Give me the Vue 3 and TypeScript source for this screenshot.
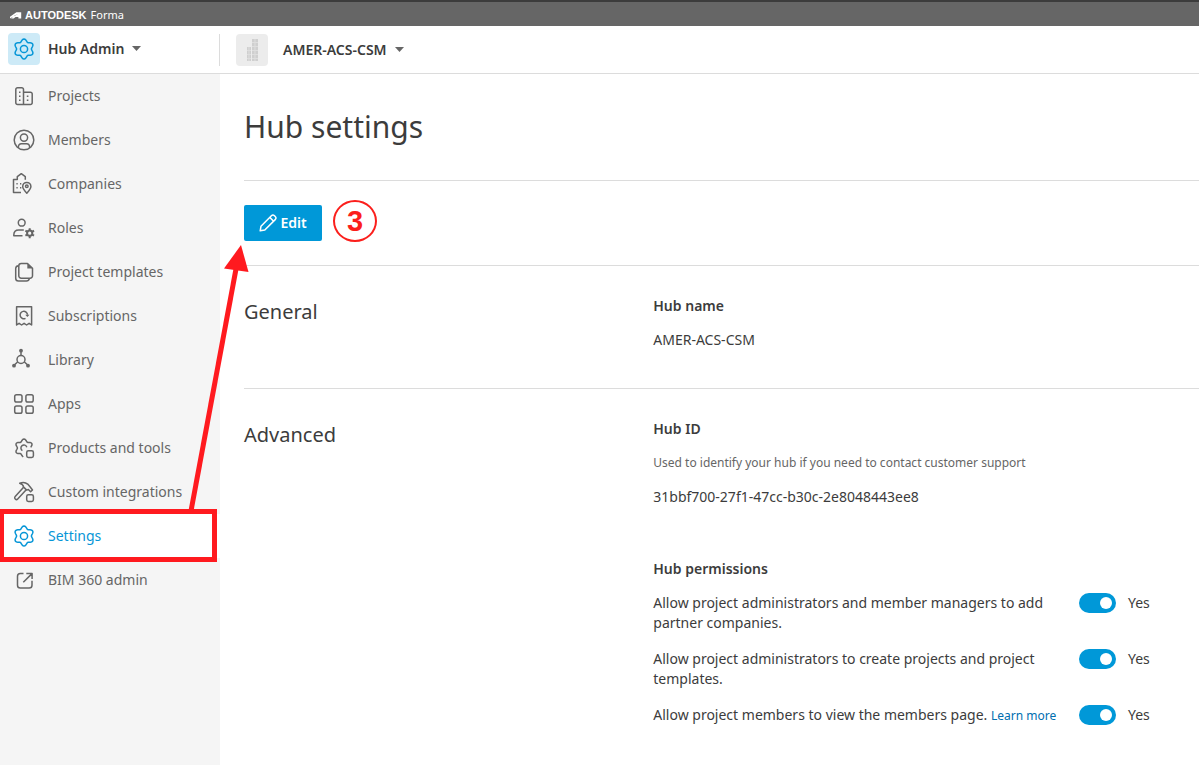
<script setup lang="ts">
import { ref } from 'vue'

interface NavItem {
  id: string
  label: string
}

interface Permission {
  id: string
  text: string
  link?: string
  enabled: boolean
}

const navItems: NavItem[] = [
  { id: 'projects', label: 'Projects' },
  { id: 'members', label: 'Members' },
  { id: 'companies', label: 'Companies' },
  { id: 'roles', label: 'Roles' },
  { id: 'templates', label: 'Project templates' },
  { id: 'subscriptions', label: 'Subscriptions' },
  { id: 'library', label: 'Library' },
  { id: 'apps', label: 'Apps' },
  { id: 'products', label: 'Products and tools' },
  { id: 'integrations', label: 'Custom integrations' },
  { id: 'settings', label: 'Settings' },
  { id: 'bim', label: 'BIM 360 admin' },
]

const active = ref('settings')

const permissions = ref<Permission[]>([
  {
    id: 'partner',
    text: 'Allow project administrators and member managers to add partner companies.',
    enabled: true,
  },
  {
    id: 'create',
    text: 'Allow project administrators to create projects and project templates.',
    enabled: true,
  },
  {
    id: 'view',
    text: 'Allow project members to view the members page.',
    link: 'Learn more',
    enabled: true,
  },
])

// Outline of a soft six-lobed gear centred in a 24px box.
function gear(radius: number, depth: number, from = 0, to = 360): string {
  const points: string[] = []
  for (let a = from; a <= to; a += 5) {
    const t = (a * Math.PI) / 180
    const r = radius - depth * Math.cos(6 * t)
    points.push(`${(12 + r * Math.cos(t)).toFixed(2)} ${(12 + r * Math.sin(t)).toFixed(2)}`)
  }
  return 'M' + points.join('L')
}

const gearPath = gear(8.7, 1.3) + 'Z'
const openGearPath = gear(7.8, 1.2, 95, 355)
</script>

<template>
  <div class="page">
    <div class="brand-bar">
      <svg class="brand-mark" viewBox="0 0 12 8" aria-hidden="true">
        <path d="M0 7.400V5.800L6.400 1.200H11.200L3.400 5.600ZM1 7.400H3.600L5.600 6H8.400V7.400H11.200V1.200L9 2.400 4.600 4.600Z" />
      </svg>
      <span class="brand-name">AUTODESK</span>
      <span class="brand-product">Forma</span>
    </div>

    <header class="header">
      <button class="switcher admin" type="button">
        <span class="tile tile-blue">
          <svg viewBox="0 0 24 24" class="icon"><path :d="gearPath" /><circle cx="12" cy="12" r="3.6" /></svg>
        </span>
        <span>Hub Admin</span>
        <svg class="caret" viewBox="0 0 9 5"><path d="M0 0H9L4.5 5Z" /></svg>
      </button>
      <button class="switcher hub" type="button">
        <span class="tile tile-grey">
          <svg viewBox="0 0 32 32" class="building">
            <path d="M11 13h4v14h-4zM16 5h6v22h-6z" />
            <path class="panes" d="M11 16.5h4M11 20.5h4M11 24.5h4M16 8.5h6M16 12.5h6M16 16.5h6M16 20.5h6M16 24.5h6M19 5v22M13 13v14" />
          </svg>
        </span>
        <span>AMER-ACS-CSM</span>
        <svg class="caret" viewBox="0 0 9 5"><path d="M0 0H9L4.5 5Z" /></svg>
      </button>
    </header>

    <div class="body">
      <nav class="sidebar" aria-label="Hub administration">
        <ul>
          <li v-for="item in navItems" :key="item.id" :class="{ active: item.id === active }">
            <a href="#" @click.prevent="active = item.id">
              <svg class="icon" viewBox="0 0 24 24" aria-hidden="true">
                <g v-if="item.id === 'projects'">
                  <path d="M11.5 20.5H5.5a1.7 1.7 0 0 1-1.7-1.7V5.5a1.7 1.7 0 0 1 1.7-1.7h4.3a1.7 1.7 0 0 1 1.7 1.7zM11.5 8.2h7a1.7 1.7 0 0 1 1.7 1.7v8.9a1.7 1.7 0 0 1-1.7 1.7h-7" />
                  <path class="dots" d="M7 8.3h1.5M7 12.2h1.5M7 16.2h1.5M14.8 12.2h1.6M14.8 16.2h1.6" />
                </g>
                <g v-else-if="item.id === 'members'">
                  <circle cx="12" cy="12" r="9.8" />
                  <circle cx="12" cy="9.6" r="3.6" />
                  <path d="M6.4 20c-.4-3 1.2-4.2 3-4.2h5.2c1.8 0 3.4 1.2 3 4.2" />
                </g>
                <g v-else-if="item.id === 'companies'">
                  <path d="M9 20.4H1.500V7.400H5.300V4.700L9.300 1.700l4 3V7.800" />
                  <path d="M14.8 21.2c-2.6-2.8-4.1-4.6-4.1-6.7a4.1 4.1 0 0 1 8.2 0c0 2.1-1.5 3.9-4.1 6.7z" />
                  <circle cx="14.8" cy="14.3" r="1.3" />
                  <path class="dots" d="M4.4 11.700h1.300M8 11.700h1.300M4.400 15.700h1.300M8 15.700h1.300" />
                </g>
                <g v-else-if="item.id === 'roles'">
                  <circle cx="9.7" cy="6.7" r="3.4" />
                  <path d="M10.5 19.700H1.800v-.700c0-3 2-5 5-5h5" />
                  <circle class="cog" cx="17.7" cy="17.2" r="2.6" />
                  <path class="cog" d="M17.7 14.500v-2.300M17.700 19.900v2.300M15.400 15.900l-2-1.200M20 18.500l2 1.200M15.400 18.500l-2 1.200M20 15.900l2-1.200" />
                </g>
                <g v-else-if="item.id === 'templates'">
                  <path d="M15.5 3.500H9.200a2.400 2.400 0 0 0-2.400 2.400v9.900a2.400 2.400 0 0 0 2.400 2.400h8.900a2.400 2.400 0 0 0 2.400-2.400V8.200z" />
                  <path class="fold" d="M15.300 3.500v5h5.200z" />
                  <path d="M6.5 5.800C4.700 6 3.700 7 3.700 8.600v9.600A2.800 2.800 0 0 0 6.500 21h8c1.500 0 2.500-.8 2.900-2.400" />
                </g>
                <g v-else-if="item.id === 'subscriptions'">
                  <path d="M4.600 2.800h15v18.200l-2.500-1.700-2.500 1.700-2.500-1.700-2.500 1.700-2.500-1.700L4.600 21z" />
                  <path d="M13.500 14.300a3.700 3.700 0 1 1 2-3.500" />
                  <path class="fold" d="M13.300 10.700h4.200l-2.100 2.300z" />
                </g>
                <g v-else-if="item.id === 'library'">
                  <circle cx="9" cy="11.500" r="4" />
                  <path d="M9 7.500V3M5.600 14 2 17.300M12.400 14l3.600 3.300" />
                  <circle class="fold" cx="9" cy="2.700" r="1.900" />
                  <circle class="fold" cx="2" cy="17.700" r="1.900" />
                  <circle class="fold" cx="16" cy="17.700" r="1.900" />
                </g>
                <g v-else-if="item.id === 'apps'">
                  <rect x="2.7" y="2.7" width="7.3" height="7.3" rx="1.8" />
                  <rect x="13.9" y="2.7" width="7.3" height="7.3" rx="1.8" />
                  <rect x="2.7" y="13.9" width="7.3" height="7.3" rx="1.8" />
                  <rect x="13.9" y="13.9" width="7.3" height="7.3" rx="1.8" />
                </g>
                <g v-else-if="item.id === 'products'">
                  <path :d="openGearPath" />
                  <path d="M10.4 14.600a3 3 0 1 1 4.400-3.400" />
                  <rect x="14.7" y="14.7" width="6.7" height="6.700" rx="1.7" />
                </g>
                <g v-else-if="item.id === 'integrations'">
                  <path d="M11.600 7.300 3.200 16.600a1.700 1.700 0 0 0 2.500 2.400L14.200 9.800" />
                  <path d="M7.700 3.200c2.800-1.200 5.900-.9 8 .9l2.300 2.700 2.500 3.200-1.900 1.700-2.200-2.200-1.700.6-3.300-3.200c.1-1.700-1.400-2.900-3.700-3.700z" />
                  <rect x="14.7" y="14.7" width="6.7" height="6.700" rx="1.7" />
                </g>
                <g v-else-if="item.id === 'settings'">
                  <path :d="gearPath" />
                  <circle cx="12" cy="12" r="3.6" />
                </g>
                <g v-else>
                  <path d="M11.5 5.500H8.300a2.800 2.800 0 0 0-2.800 2.800v8.900A2.800 2.800 0 0 0 8.300 20h8.900a2.800 2.800 0 0 0 2.800-2.800v-4.400M11.300 14.300 20 5.600M14.300 5.500h5.800v5.600" />
                </g>
              </svg>
              <span>{{ item.label }}</span>
            </a>
            <span v-if="item.id === 'settings'" class="callout-box" aria-hidden="true"></span>
          </li>
        </ul>
      </nav>

      <main class="content">
        <h1>Hub settings</h1>

        <div class="toolbar">
          <button class="edit" type="button">
            <svg viewBox="0 0 18 18" aria-hidden="true">
              <path d="M1.2 16.800 2 12.200 12.400 1.800a2.200 2.200 0 0 1 3.100 0l.7.7a2.200 2.200 0 0 1 0 3.100L5.800 16zM10.800 3.400l3.800 3.800" />
            </svg>
            <span>Edit</span>
          </button>
          <span class="step">3</span>
        </div>

        <section class="section general">
          <h2>General</h2>
          <div class="fields">
            <h3>Hub name</h3>
            <p>AMER-ACS-CSM</p>
          </div>
        </section>

        <section class="section">
          <h2>Advanced</h2>
          <div class="fields">
            <h3>Hub ID</h3>
            <p class="hint">Used to identify your hub if you need to contact customer support</p>
            <p>31bbf700-27f1-47cc-b30c-2e8048443ee8</p>

            <h3 class="permissions-title">Hub permissions</h3>
            <div v-for="permission in permissions" :key="permission.id" class="permission">
              <p :id="permission.id + '-text'">
                {{ permission.text }}
                <a v-if="permission.link" href="#">{{ permission.link }}</a>
              </p>
              <label class="toggle">
                <input
                  v-model="permission.enabled"
                  type="checkbox"
                  role="switch"
                  :aria-describedby="permission.id + '-text'"
                />
                <span>{{ permission.enabled ? 'Yes' : 'No' }}</span>
              </label>
            </div>
          </div>
        </section>
      </main>
    </div>

    <svg class="arrow" viewBox="0 0 40 270" aria-hidden="true">
      <path class="shaft" d="M6 266 51 24" />
      <path class="head" d="M56 0 39 23.500 63.500 27Z" />
    </svg>
  </div>
</template>

<style>
body {
  margin: 0;
  background: #fff;
}
</style>

<style scoped>
.page {
  position: relative;
  display: flex;
  flex-direction: column;
  min-height: 100vh;
  overflow: hidden;
  color: #3c3c3c;
  background: #fff;
  font-family: "Noto Sans", "Open Sans", sans-serif;
  font-size: 14px;
  line-height: 20px;
}

h1, h2, h3, p, ul {
  margin: 0;
  padding: 0;
}

button {
  padding: 0;
  border: 0;
  background: none;
  color: inherit;
  font: inherit;
  cursor: pointer;
}

a {
  text-decoration: none;
}

.brand-bar {
  display: flex;
  align-items: center;
  box-sizing: border-box;
  height: 26px;
  padding: 2px 10px 0;
  border-top: 2px solid #3c3c3c;
  background: #666;
  color: #fff;
  font-size: 11px;
}

.brand-mark {
  width: 12px;
  height: 8px;
  margin-right: 3px;
  fill: #fff;
}

.brand-name {
  margin-right: 4px;
  font-family: "Liberation Sans", sans-serif;
  font-weight: 700;
}

.header {
  display: flex;
  align-items: center;
  height: 47px;
  border-bottom: 1px solid #dcdcdc;
}

.switcher {
  display: flex;
  align-items: center;
  font-weight: 600;
}

.admin {
  box-sizing: border-box;
  width: 219px;
  padding: 0 0 2px 8px;
  gap: 8px;
}

.hub {
  height: 32px;
  padding-left: 16px;
  border-left: 1px solid #dcdcdc;
  gap: 8px;
}

.tile {
  display: flex;
  align-items: center;
  justify-content: center;
  width: 32px;
  height: 32px;
  border-radius: 4px;
}

.tile-blue {
  background: #cdeaf7;
  color: #0696d7;
}

.tile-grey {
  margin-right: 7px;
  background: #ececec;
}

.building {
  width: 32px;
  height: 32px;
  fill: #cfcfcf;
}

.panes {
  stroke: #dedede;
  stroke-width: 1;
}

.caret {
  width: 9px;
  height: 5px;
  fill: #666;
}

.icon {
  flex: none;
  width: 24px;
  height: 24px;
  fill: none;
  stroke: currentColor;
  stroke-width: 1.5;
  stroke-linejoin: round;
}

.dots {
  stroke-width: 1.6;
}

.cog {
  stroke-width: 2;
}

.fold {
  fill: currentColor;
  stroke: none;
}

.body {
  display: flex;
  flex: 1;
}

.sidebar {
  flex: none;
  width: 220px;
  background: #f5f5f5;
}

.sidebar ul {
  list-style: none;
}

.sidebar li {
  position: relative;
}

.sidebar a {
  display: flex;
  align-items: center;
  height: 44px;
  padding-left: 12px;
  gap: 12px;
  color: #666;
}

.sidebar .active a {
  background: #fff;
  color: #0696d7;
}

.callout-box {
  position: absolute;
  inset: -5px 3px -4px -1px;
  border: 5px solid #ff1a1f;
  pointer-events: none;
}

.content {
  flex: 1;
  min-width: 0;
  padding-left: 24px;
}

h1 {
  padding: 33px 0;
  font-size: 30px;
  font-weight: 400;
  line-height: 40px;
}

.toolbar {
  display: flex;
  align-items: center;
  height: 84px;
  gap: 11px;
  border-top: 1px solid #dcdcdc;
}

.edit {
  display: flex;
  align-items: center;
  justify-content: center;
  width: 78px;
  height: 36px;
  gap: 3px;
  border-radius: 2px;
  background: #0098d8;
  color: #fff;
  font-weight: 600;
}

.edit svg {
  width: 18px;
  height: 18px;
  fill: none;
  stroke: #fff;
  stroke-width: 1.5;
  stroke-linejoin: round;
}

.step {
  display: flex;
  align-items: center;
  justify-content: center;
  box-sizing: border-box;
  width: 44px;
  height: 42px;
  margin-bottom: 4px;
  border: 2px solid #fb1f1c;
  border-radius: 50%;
  color: #fb1f1c;
  font-family: "Liberation Sans", sans-serif;
  font-size: 29px;
  font-weight: 700;
}

.section {
  display: grid;
  grid-template-columns: 3fr 4fr;
  padding: 30px 0;
  border-top: 1px solid #dcdcdc;
}

.general {
  padding-bottom: 38px;
}

h2 {
  padding-top: 4px;
  font-size: 20px;
  font-weight: 400;
  line-height: 24px;
}

h3 {
  margin-bottom: 14px;
  font-size: 14px;
  font-weight: 600;
  line-height: 20px;
}

.fields .hint {
  margin-bottom: 14px;
  color: #666;
  font-size: 12px;
}

.permissions-title {
  margin-top: 52px;
}

.permission {
  display: grid;
  grid-template-columns: 1fr 120px;
  align-items: start;
  margin-bottom: 16px;
}

.permission p {
  padding-right: 16px;
}

.permission a {
  color: #006eaf;
  font-size: 12px;
}

.toggle {
  display: flex;
  align-items: center;
  gap: 12px;
}

.toggle input {
  appearance: none;
  box-sizing: border-box;
  width: 37px;
  height: 20px;
  margin: 0;
  padding: 4px;
  border-radius: 10px;
  background: #999;
  cursor: pointer;
}

.toggle input::before {
  content: "";
  display: block;
  width: 12px;
  height: 12px;
  border-radius: 50%;
  background: #fff;
}

.toggle input:checked {
  background: #0098d8;
}

.toggle input:checked::before {
  margin-left: auto;
}

.arrow {
  position: absolute;
  top: 245px;
  left: 185px;
  width: 40px;
  height: 270px;
  overflow: visible;
  pointer-events: none;
}

.shaft {
  stroke: #ff1a1f;
  stroke-width: 5;
}

.head {
  fill: #ff1a1f;
}
</style>
